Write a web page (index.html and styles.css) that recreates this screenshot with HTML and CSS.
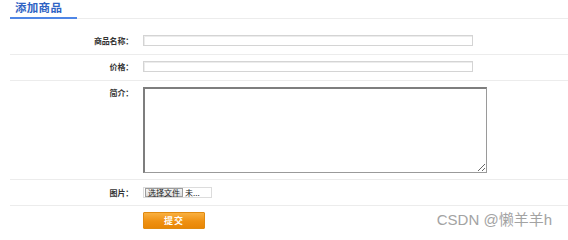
FILE: index.html
```html
<!DOCTYPE html>
<html lang="zh">
<head>
<meta charset="utf-8">
<title>添加商品</title>
<link rel="stylesheet" href="styles.css">
</head>
<body>
<div class="page">
  <div class="tabs">
    <div class="tab">添加商品</div>
  </div>
  <form class="form">
    <div class="row row-first">
      <label class="lbl">商品名称：</label>
      <input class="txt" type="text">
    </div>
    <div class="row">
      <label class="lbl">价格：</label>
      <input class="txt" type="text">
    </div>
    <div class="row row-area">
      <label class="lbl">简介：</label>
      <textarea class="area"></textarea>
    </div>
    <div class="row row-file">
      <label class="lbl">图片：</label>
      <span class="file"><span class="file-btn">选择文件</span><span class="file-name">未...</span></span>
    </div>
    <div class="row row-submit">
      <span class="lbl"></span>
      <button class="submit" type="button">提交</button>
    </div>
  </form>
</div>
<div class="mark">CSDN @懒羊羊h</div>
</body>
</html>
```
FILE: styles.css
```css
html, body {
  margin: 0;
  padding: 0;
  background: #fff;
}
body {
  font-family: "Noto Sans CJK SC", "Liberation Sans", sans-serif;
  color: #333;
  width: 568px;
  height: 240px;
  overflow: hidden;
  position: relative;
}
.page {
  margin-left: 10px;
}
.tabs {
  height: 18px;
  border-bottom: 1px solid #ececec;
  display: flex;
}
.tab {
  width: 67px;
  box-sizing: border-box;
  padding-left: 5px;
  font-size: 11.5px;
  font-weight: bold;
  line-height: 15px;
  color: #2f63c4;
  border-bottom: 2px solid #4f86e6;
  height: 19px;
  letter-spacing: 0.3px;
}
.form {
  margin: 0;
}
.row {
  display: flex;
  align-items: flex-start;
  padding: 6px 0 8px;
  border-bottom: 1px solid #ececec;
}
.row-first {
  padding-top: 16px;
}
.row-area {
  padding-bottom: 6px;
}
.row-file {
  padding: 7px 0;
}
.row-submit {
  border-bottom: none;
  padding-top: 6px;
}
.lbl {
  width: 123px;
  flex: none;
  text-align: right;
  font-size: 8px;
  line-height: 11px;
  font-weight: bold;
  color: #333;
  margin-right: 10px;
  letter-spacing: -0.2px;
}
.txt {
  box-sizing: border-box;
  width: 330px;
  height: 11px;
  margin: 0;
  padding: 0;
  border: 1px solid #d4d4d4;
  box-shadow: inset 1px 1px 0 #ececec;
  outline: none;
  background: #fff;
}
.area {
  box-sizing: border-box;
  width: 344px;
  height: 86px;
  margin: 0;
  padding: 0;
  border: 1px solid #8a8a8a;
  border-left-width: 2px;
  border-top-width: 2px;
  border-color: #7e7e7e #9a9a9a #9a9a9a #7e7e7e;
  background: #fff;
  outline: none;
}
.file {
  display: flex;
  align-items: center;
  box-sizing: border-box;
  width: 69px;
  height: 11px;
  border: 1px solid #dcdcdc;
  overflow: hidden;
  font-size: 8px;
  line-height: 9px;
  color: #222;
}
.file-btn {
  box-sizing: border-box;
  height: 9px;
  margin-left: 1px;
  padding: 0 2px;
  border: 1px solid #9c9c9c;
  background: linear-gradient(#f4f4f4, #dcdcdc);
  line-height: 7px;
  font-size: 8px;
  white-space: nowrap;
}
.file-name {
  margin-left: 2px;
  white-space: nowrap;
}
.submit {
  width: 62px;
  height: 17px;
  margin: 0;
  padding: 0;
  border: 1px solid #e08a10;
  border-radius: 1px;
  background: linear-gradient(#f9b040, #ef9112 55%, #e88605);
  color: #fff;
  font-family: "Noto Sans CJK SC", sans-serif;
  font-size: 9px;
  font-weight: bold;
  line-height: 15px;
  letter-spacing: 1px;
}
.mark {
  position: absolute;
  right: 16px;
  top: 209px;
  font-family: "Liberation Sans", "Noto Sans CJK SC", sans-serif;
  font-size: 15px;
  line-height: 22px;
  color: #a3a3a3;
}
```
